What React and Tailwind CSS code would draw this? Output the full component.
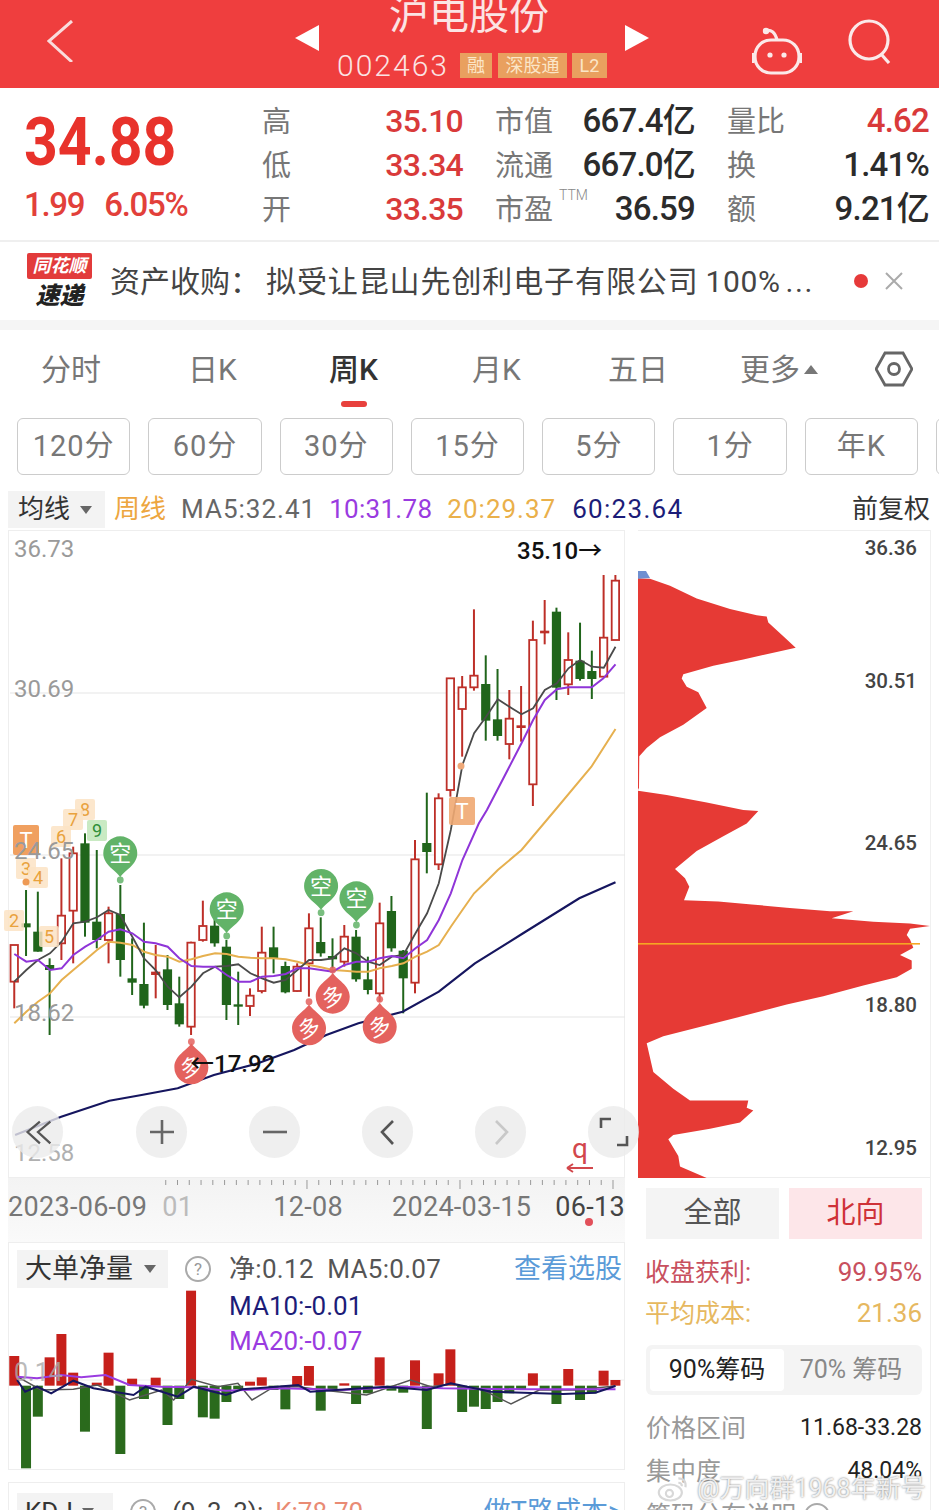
import React from 'react';

const FONT = "font-['Roboto','Noto_Sans_CJK_SC',sans-serif]";

// chart data was read off the zoom crops, so convert back to page pixels
const X = (zx) => zx / 2.49;
const Y = (z) => 830 + z / 3;
const step = 29.35;
const cx = (i) => X(33 + i * step);

const CANDLES = [
  ['R', 345, 345, 455, 535], ['G', 180, 280, 292, 378], ['G', 185, 305, 365, 365], ['G', 385, 405, 420, 615],
  ['R', 85, 257, 340, 390], ['R', 50, 70, 242, 400], ['G', 10, 40, 278, 320], ['G', 60, 275, 330, 355],
  ['R', 230, 250, 330, 400], ['G', 165, 252, 390, 440], ['G', 325, 445, 458, 495], ['G', 278, 462, 527, 535],
  ['r', 345, 425, 435, 505], ['G', 375, 418, 525, 540], ['G', 440, 520, 583, 590], ['R', 335, 338, 590, 615],
  ['R', 212, 288, 330, 335], ['G', 265, 287, 340, 350], ['G', 330, 350, 525, 570], ['G', 425, 523, 530, 585],
  ['R', 475, 497, 528, 558], ['R', 290, 368, 483, 490], ['G', 290, 352, 385, 430], ['G', 395, 408, 487, 490],
  ['R', 400, 410, 483, 485], ['R', 250, 295, 400, 500], ['G', 262, 336, 370, 380], ['G', 325, 378, 388, 415],
  ['R', 285, 320, 395, 410], ['G', 300, 320, 448, 455], ['G', 380, 448, 480, 493], ['R', 218, 280, 490, 515],
  ['G', 198, 243, 355, 365], ['G', 360, 362, 445, 550], ['R', 30, 88, 458, 490], ['G', -112, 39, 66, 130],
  ['R', -110, -95, 103, 120], ['R', -455, -455, -120, -100], ['R', -462, -428, -363, -220], ['R', -662, -463, -428, -418],
  ['G', -524, -438, -328, -268], ['G', -483, -332, -282, -268], ['R', -420, -334, -258, -212], ['r', -432, -314, -306, -265],
  ['R', -628, -570, -137, -72], ['r', -690, -598, -590, -557], ['G', -667, -655, -427, -390], ['R', -593, -510, -437, -405],
  ['G', -622, -508, -453, -448], ['G', -538, -477, -453, -393], ['R', -765, -577, -460, -460], ['R', -765, -748, -570, -570],
];

const MA5 = [[33,455],[63,420],[92,390],[122,370],[151,335],[180,280],[210,275],[239,262],[268,240],[297,255],[327,320],[356,385],[385,420],[415,470],[444,502],[474,470],[503,430],[533,410],[562,408],[591,403],[621,430],[650,445],[679,458],[709,450],[738,420],[767,390],[797,390],[826,385],[855,355],[885,370],[914,395],[943,405],[973,380],[1002,375],[1032,310],[1061,250],[1090,160],[1120,0],[1149,-195],[1178,-290],[1208,-340],[1237,-392],[1266,-370],[1296,-347],[1325,-365],[1354,-420],[1384,-440],[1413,-485],[1442,-510],[1471,-490],[1501,-487],[1530,-550]];
const MA10 = [[33,372],[63,395],[92,390],[122,420],[151,415],[180,375],[210,350],[239,330],[268,305],[297,298],[327,310],[356,335],[385,340],[415,350],[444,385],[474,408],[503,410],[533,410],[562,435],[591,455],[621,455],[650,440],[679,438],[709,432],[738,415],[767,415],[797,420],[826,425],[855,405],[885,395],[914,395],[943,385],[973,378],[1002,385],[1032,355],[1061,330],[1090,270],[1120,190],[1149,90],[1190,-20],[1210,-60],[1296,-260],[1325,-330],[1354,-390],[1384,-422],[1413,-428],[1471,-428],[1500,-455],[1530,-497]];
const MA20 = [[33,580],[63,545],[92,515],[122,490],[151,450],[180,420],[210,390],[239,360],[268,335],[297,338],[327,345],[356,365],[385,375],[415,380],[444,395],[474,388],[503,378],[533,370],[562,372],[591,380],[621,383],[650,385],[679,385],[709,388],[738,395],[767,405],[797,412],[826,420],[855,422],[885,425],[914,425],[943,415],[973,408],[1002,400],[1032,380],[1061,365],[1090,345],[1120,290],[1149,240],[1178,190],[1208,155],[1237,120],[1296,60],[1380,-60],[1470,-190],[1530,-303]];
const MA60 = [[35,915],[150,860],[270,812],[350,795],[440,775],[530,735],[640,700],[730,660],[810,615],[890,580],[1000,545],[1090,485],[1180,400],[1300,310],[1440,205],[1530,157]];

const line = (pts) => pts.map(([a, b]) => `${X(a).toFixed(1)},${Y(b).toFixed(1)}`).join(' ');

const PROFILE = [[24,118],[60,118],[120,135],[200,165],[300,190],[380,205],[410,208],[415,222],[460,255],[497,282],[440,292],[340,310],[250,325],[160,345],[155,355],[170,375],[205,388],[230,425],[160,465],[90,495],[50,520],[28,540],[27,615],[24,620],[24,622],[110,632],[230,650],[340,668],[385,670],[350,700],[280,730],[200,765],[135,808],[165,830],[178,850],[162,882],[265,885],[365,892],[470,900],[600,908],[670,908],[605,925],[730,933],[840,937],[900,943],[840,950],[830,965],[840,975],[850,995],[810,1012],[845,1025],[845,1045],[800,1065],[700,1085],[580,1110],[470,1130],[350,1155],[200,1185],[100,1205],[50,1222],[70,1290],[130,1330],[180,1358],[355,1358],[350,1375],[370,1382],[330,1410],[240,1425],[130,1440],[115,1450],[145,1490],[150,1515],[230,1542],[24,1542]];
const profilePts = PROFILE.map(([a, b]) => `${(630 + a / 3).toFixed(1)},${(530 + b / 2.376).toFixed(1)}`).join(' ');

// big order bars: [colour, end of bar in crop units]
const BARS = [['R',378],['G',715],['G',560],['R',382],['R',312],['R',428],['G',605],['R',458],['R',368],['G',672],['R',446],['G',507],['R',443],['G',585],['G',507],['R',182],['G',562],['G',566],['G',516],['G',478],['R',455],['R',442],['G',480],['G',538],['R',438],['R',408],['G',542],['G',478],['R',460],['G',522],['G',490],['R',382],['G',482],['G',488],['R',391],['G',597],['R',430],['R',358],['G',546],['G',530],['G',537],['G',516],['G',490],['G',480],['R',430],['G',480],['G',522],['R',417],['G',510],['G',490],['R',422],['R',450]];
const VY = (z) => 1230 + z / 3;
const vline = (pts) => pts.map(([a, b]) => `${X(a).toFixed(1)},${VY(b).toFixed(1)}`).join(' ');
const V_MA5 = [[40,440],[100,480],[180,478],[240,465],[320,510],[400,480],[430,510],[474,448],[540,470],[590,460],[625,510],[680,470],[740,470],[800,480],[910,495],[1020,450],[1070,470],[1120,462],[1200,480],[1270,522],[1340,480],[1430,480],[1530,468]];
const V_MA10 = [[40,450],[60,485],[90,470],[125,490],[180,452],[230,475],[330,495],[360,470],[440,500],[480,470],[560,495],[600,478],[740,465],[770,485],[900,475],[960,470],[1060,480],[1120,460],[1220,485],[1400,492],[1480,488],[1530,468]];
const V_MA20 = [[40,440],[90,445],[150,435],[200,442],[260,435],[320,465],[400,470],[480,472],[560,482],[700,475],[850,480],[1000,470],[1100,475],[1300,478],[1530,478]];

const GREEN_PINS = [[297, 70, 150], [562, 238, 318], [797, 168, 248], [885, 205, 285]];
const RED_PINS = [[826, 500, 420], [767, 595, 515], [943, 590, 508], [474, 712, 635]];
const BADGES = [
  ['8', 84, 809, '#fbe3c4', '#e9a23d'], ['7', 72, 819, '#fbe3c4', '#e9a23d'], ['6', 60, 836, '#fbe3c4', '#e9a23d'],
  ['9', 96, 830, '#bfe6b8', '#2f8f3a'], ['3', 25, 868, '#fbe3c4', '#e9a23d'], ['4', 37, 877, '#fbe3c4', '#e9a23d'],
  ['2', 13, 920, '#fbe3c4', '#e9a23d'], ['5', 48, 936, '#fbe3c4', '#e9a23d'],
];

const PILLS = ['120分', '60分', '30分', '15分', '5分', '1分', '年K', ''];

const Help = ({ className }) => (
  <div className={`flex items-center justify-center w-[26px] h-[26px] rounded-full border-2 border-[#aaa] text-[#999] text-[17px] leading-none shrink-0 ${className}`}>?</div>
);

const Candles = () => (
  <g>
    {CANDLES.map(([c, wt, bt, bb, wb], i) => {
      const x = cx(i);
      const red = c !== 'G';
      const col = red ? '#bd2f28' : '#20651b';
      return (
        <g key={i}>
          <line x1={x} x2={x} y1={Y(wt)} y2={Y(wb)} stroke={col} strokeWidth="2" />
          {c === 'R' ? (
            <rect x={x - 3.7} y={Y(bt)} width="7.4" height={Y(bb) - Y(bt)} fill="#fff" stroke={col} strokeWidth="1.8" />
          ) : (
            <rect x={x - 4.6} y={Y(bt)} width="9.2" height={Y(bb) - Y(bt)} fill={col} />
          )}
        </g>
      );
    })}
  </g>
);

const Pin = ({ x, y, dot, up }) => {
  const px = X(x);
  const py = Y(y);
  const s = up ? -1 : 1;
  const fill = up ? '#e4625e' : '#62b368';
  return (
    <g>
      <path
        d={`M${px} ${py + s * 24} C${px - 4} ${py + s * 17} ${px - 17} ${py + s * 12} ${px - 17} ${py} A17 17 0 1 ${up ? 0 : 1} ${px + 17} ${py} C${px + 17} ${py + s * 12} ${px + 4} ${py + s * 17} ${px} ${py + s * 24}Z`}
        fill={fill}
      />
      <circle cx={px} cy={Y(dot)} r="3.4" fill={fill} opacity="0.85" />
      <text x={px} y={py + 8} textAnchor="middle" fontSize="22" fill="#fff" transform={up ? `rotate(-18 ${px} ${py})` : undefined}>
        {up ? '多' : '空'}
      </text>
    </g>
  );
};

const CircleBtn = ({ children, className = '' }) => (
  <div className={`w-[51px] h-[52px] rounded-full bg-[#ebebeb]/80 flex items-center justify-center shrink-0 ${className}`}>{children}</div>
);

const KChart = () => (
  <div className="relative h-[648px] border border-[#eee]">
    <svg viewBox="8 531 617 648" className={`absolute left-0 top-0 w-[617px] h-[648px] overflow-visible ${FONT}`}>
      {[693, 855, 1017].map((y) => (
        <line key={y} x1="9" x2="624" y1={y} y2={y} stroke="#e6e6e6" strokeWidth="1.2" />
      ))}
      <Candles />
      <polyline points={line(MA20)} fill="none" stroke="#e6b04f" strokeWidth="2" />
      <polyline points={line(MA5)} fill="none" stroke="#4a4a4a" strokeWidth="1.8" />
      <polyline points={line(MA10)} fill="none" stroke="#8f35d8" strokeWidth="2" />
      <polyline points={line(MA60)} fill="none" stroke="#16165f" strokeWidth="2.2" />
      {BADGES.map(([t, x, y, bg, col]) => (
        <g key={t}>
          <rect x={x - 10} y={y - 10} width="20" height="21" rx="2" fill={bg} opacity="0.85" />
          <text x={x} y={y + 7} textAnchor="middle" fontSize="18" fill={col}>{t}</text>
        </g>
      ))}
      <circle cx="25" cy="882" r="3.5" fill="#ee9a55" />
      <rect x="12" y="825" width="26" height="30" rx="2" fill="#f0a060" />
      <text x="25" y="848" textAnchor="middle" fontSize="22" fill="#fff">T</text>
      <circle cx="460" cy="766" r="3.5" fill="#eea878" />
      <rect x="448" y="797" width="26" height="28" rx="2" fill="#f0a872" opacity="0.9" />
      <text x="461" y="819" textAnchor="middle" fontSize="22" fill="#fff">T</text>
      {GREEN_PINS.map(([x, y, d]) => <Pin key={x} x={x} y={y} dot={d} />)}
      {RED_PINS.map(([x, y, d]) => <Pin key={x} x={x} y={y} dot={d} up />)}
      <text x="13" y="557" fontSize="24" fill="#9a9a9a">36.73</text>
      <text x="13" y="697" fontSize="24" fill="#9a9a9a">30.69</text>
      <text x="13" y="859" fontSize="24" fill="#9a9a9a">24.65</text>
      <text x="13" y="1021" fontSize="24" fill="#9a9a9a">18.62</text>
      <text x="13" y="1161" fontSize="24" fill="#b0b0b0">12.58</text>
      <text x="516" y="559" fontSize="24" fontWeight="500" fill="#111">35.10→</text>
      <text x="189" y="1072" fontSize="24" fontWeight="500" fill="#111">←17.92</text>
      <text x="579" y="1158" textAnchor="middle" fontSize="28" fill="#d2474c">q</text>
      <path d="M566 1168H592M566 1168l6-4M566 1168l6 4" stroke="#d2474c" strokeWidth="2" fill="none" />
    </svg>
    <div className="absolute left-[3px] top-[575px] flex gap-[62px] z-10">
      <CircleBtn className="mr-[11px]">
        <svg viewBox="0 0 40 40" className="w-[38px] h-[38px]" fill="none" stroke="#555" strokeWidth="2.4"><path d="M22 9 9 20l13 12M33 9 20 20l13 12" /></svg>
      </CircleBtn>
      <CircleBtn>
        <svg viewBox="0 0 30 30" className="w-[30px] h-[30px]" fill="none" stroke="#666" strokeWidth="2.6"><path d="M15 3v24M3 15h24" /></svg>
      </CircleBtn>
      <CircleBtn>
        <svg viewBox="0 0 30 30" className="w-[30px] h-[30px]" fill="none" stroke="#666" strokeWidth="2.6"><path d="M3 15h24" /></svg>
      </CircleBtn>
      <CircleBtn>
        <svg viewBox="0 0 30 30" className="w-[30px] h-[30px]" fill="none" stroke="#555" strokeWidth="2.6"><path d="M20 4 9 15l11 12" /></svg>
      </CircleBtn>
      <CircleBtn>
        <svg viewBox="0 0 30 30" className="w-[30px] h-[30px]" fill="none" stroke="#c8c8c8" strokeWidth="2.6"><path d="M10 4l11 11-11 12" /></svg>
      </CircleBtn>
      <CircleBtn>
        <svg viewBox="0 0 30 30" className="w-[30px] h-[30px]" fill="none" stroke="#555" strokeWidth="2.6"><path d="M2 11V2h10M28 19v9H18" /></svg>
      </CircleBtn>
    </div>
  </div>
);

const DateAxis = () => (
  <div className="relative h-[64px] bg-gradient-to-b from-[#f3f3f3] to-[#fafafa]">
    <svg viewBox="8 0 617 12" className="absolute left-0 top-0 w-[617px] h-[12px]">
      {Array.from({ length: 39 }).map((_, i) => (
        <line key={i} x1={613 - i * 11.77} x2={613 - i * 11.77} y1="2" y2={i % 13 === 0 ? 11 : 7} stroke="#999" strokeWidth="1" />
      ))}
    </svg>
    <div className="flex items-center h-[52px] pt-[6px] text-[27px] tracking-[0.3px] text-[#777] whitespace-nowrap">
      <span>2023-06-09</span>
      <span className="ml-[15px] text-[#bbb]">01</span>
      <span className="ml-[80px]">12-08</span>
      <span className="ml-[49px]">2024-03-15</span>
      <span className="ml-[24px] text-[#444]">06-13</span>
    </div>
    <div className="absolute left-[577px] top-[40px] w-2 h-2 rounded-full bg-[#e2505a]" />
  </div>
);

const VolumePanel = () => (
  <div className="relative h-[228px] border border-[#eee]">
    <svg viewBox="8 1243 617 228" className="absolute left-0 top-0 w-[617px] h-[228px]">
      <line x1="9" x2="624" y1="1380" y2="1380" stroke="#eee" />
      {BARS.map(([c, z], i) => {
        const y = VY(z);
        const base = VY(467);
        return (
          <rect key={i} x={cx(i) - 5} y={Math.min(y, base)} width="10" height={Math.abs(base - y)} fill={c === 'R' ? '#c6201b' : '#2a6a1c'} />
        );
      })}
      <polyline points={vline(V_MA5)} fill="none" stroke="#555" strokeWidth="1.5" />
      <polyline points={vline(V_MA20)} fill="none" stroke="#9a3be0" strokeWidth="2" />
      <polyline points={vline(V_MA10)} fill="none" stroke="#16165f" strokeWidth="2" />
      <text x="13" y="1381" fontSize="25" fill="#aaa" opacity="0.8">0.14</text>
    </svg>
    <div className="relative flex items-center pt-[6px] pl-[8px] pr-[2px]">
      <div className="w-[151px] h-[38px] bg-[#f3f3f3] flex items-center pl-[8px] text-[27px] text-[#333]">
        大单净量
        <span className="ml-[11px] border-x-[6px] border-x-transparent border-t-[8px] border-t-[#666]" />
      </div>
      <Help className="ml-[17px]" />
      <span className="ml-[18px] text-[26px] tracking-[0.3px] text-[#555]">净:0.12&nbsp;&nbsp;MA5:0.07</span>
      <span className="ml-auto text-[27px] text-[#5b9bd8]">查看选股</span>
    </div>
    <div className="relative pl-[220px] text-[26px] leading-[35px] -mt-[1px]">
      <div className="text-[#1c1c78]">MA10:-0.01</div>
      <div className="text-[#9a3be0]">MA20:-0.07</div>
    </div>
  </div>
);

const KdjPanel = () => (
  <div className="mt-[12px] h-[40px] border-t border-x border-[#eee] relative overflow-hidden">
    <div className="flex items-center pt-[9px] pl-[8px] pr-[2px] whitespace-nowrap">
      <div className="w-[96px] h-[38px] bg-[#f3f3f3] flex items-center pl-[8px] text-[26px] text-[#333]">
        KDJ
        <span className="ml-[9px] border-x-[6px] border-x-transparent border-t-[8px] border-t-[#666]" />
      </div>
      <Help className="ml-[17px]" />
      <span className="ml-[16px] text-[26px] text-[#444]">(9, 3, 3):</span>
      <span className="ml-[12px] text-[26px] text-[#e98b74]">K:78.70</span>
      <span className="ml-auto text-[27px] text-[#5b9bd8]">做T路成本&gt;</span>
    </div>
  </div>
);

const ChipPanel = () => (
  <div className="w-[293px] border-r border-[#f0f0f0] shrink-0 relative">
    <div className="relative h-[648px]">
      <svg viewBox="638 531 293 648" className={`absolute left-0 top-0 w-[293px] h-[648px] ${FONT}`}>
        <rect x="638" y="531" width="292" height="1" fill="#eee" />
        <rect x="638" y="1178" width="292" height="1" fill="#eee" />
        <polygon points="638,572 646,572 650,579 638,580" fill="#6f8fd0" />
        <polygon points={profilePts} fill="#e63a35" />
        <rect x="638" y="944" width="282" height="1.6" fill="#f6a623" />
        {[['36.36', 556], ['30.51', 689], ['24.65', 851], ['18.80', 1013], ['12.95', 1156]].map(([t, y]) => (
          <text key={t} x="917" y={y} textAnchor="end" fontSize="20.5" fontWeight="500" fill="#444">{t}</text>
        ))}
      </svg>
    </div>
    <div className="px-[8px] pt-[10px]">
      <div className="flex gap-[10px] w-[276px]">
        <div className="flex-1 h-[51px] flex items-center justify-center bg-[#f4f4f4] text-[29px] text-[#555]">全部</div>
        <div className="flex-1 h-[51px] flex items-center justify-center bg-[#fde6e9] text-[29px] text-[#cf3238]">北向</div>
      </div>
      <div className="w-[276px] mt-[13px] flex justify-between items-center h-[41px] text-[26px] text-[#c8505e]">
        <span className="text-[25px] -ml-[1px]">收盘获利:</span><span>99.95%</span>
      </div>
      <div className="w-[276px] flex justify-between items-center h-[41px] text-[26px] text-[#e6b860]">
        <span className="text-[25px] -ml-[1px]">平均成本:</span><span>21.36</span>
      </div>
      <div className="w-[276px] mt-[11px] h-[50px] bg-[#f4f4f4] rounded-[6px] flex items-center p-[4px]">
        <div className="w-[134px] h-[42px] bg-white rounded-[4px] flex items-center justify-center text-[25px] text-[#222]">90%筹码</div>
        <div className="flex-1 text-center text-[25px] text-[#888]">70% 筹码</div>
      </div>
      <div className="w-[276px] mt-[12px] flex justify-between items-center h-[43px]">
        <span className="text-[25px] text-[#999]">价格区间</span>
        <span className="text-[23px] text-[#222]">11.68-33.28</span>
      </div>
      <div className="w-[276px] flex justify-between items-center h-[43px]">
        <span className="text-[25px] text-[#999]">集中度</span>
        <span className="text-[23px] text-[#222]">48.04%</span>
      </div>
      <div className="flex items-center h-[30px] mt-[8px] text-[25px] text-[#999] whitespace-nowrap">
        筹码分布说明
        <Help className="ml-[8px]" />
      </div>
    </div>
  </div>
);

const App = () => (
  <div className={`relative w-[939px] h-[1510px] overflow-hidden bg-white ${FONT}`}>
    {/* red title bar */}
    <div className="h-[88px] bg-[#ef3e3e] flex items-start pl-[47px] overflow-hidden">
      <svg viewBox="0 0 26 42" className="w-[26px] h-[42px] mt-[20px] shrink-0" fill="none" stroke="#f9dcdc" strokeWidth="3">
        <path d="M25 1 2 21l23 21" />
      </svg>
      <div className="ml-[222px] mt-[25px] w-0 h-0 border-y-[13px] border-y-transparent border-r-[24px] border-r-white shrink-0" />
      <div className="w-[306px] shrink-0 flex flex-col items-center -mt-[4px]">
        <div className="text-[40px] leading-[40px] text-[#fbe4e4] whitespace-nowrap -ml-[6px]">沪电股份</div>
        <div className="flex items-center mt-[11px] h-[36px]">
          <span className="text-[30px] tracking-[2px] font-light text-[#fbe4e4]">002463</span>
          <span className="ml-[11px] w-[32px] h-[25px] bg-[#e9a05f] flex items-center justify-center text-[18px] text-[#fbe6c8]">融</span>
          <span className="ml-[6px] w-[69px] h-[25px] bg-[#e9a05f] flex items-center justify-center text-[18px] text-[#fbe6c8]">深股通</span>
          <span className="ml-[5px] w-[35px] h-[25px] bg-[#e9a05f] flex items-center justify-center text-[18px] text-[#fbe6c8]">L2</span>
        </div>
      </div>
      <div className="mt-[25px] w-0 h-0 border-y-[13px] border-y-transparent border-l-[24px] border-l-white shrink-0" />
      <svg viewBox="0 0 50 50" className="ml-[103px] mt-[27px] w-[50px] h-[50px] shrink-0" fill="none" stroke="#fbe9e9" strokeWidth="3.2">
        <path d="M13 4c6-2 10 1 12 9" />
        <circle cx="14" cy="4" r="1.6" fill="#fbe9e9" />
        <rect x="3" y="13" width="44" height="33" rx="16" />
        <path d="M1 26v10M49 26v10" />
        <circle cx="18" cy="28" r="2.6" fill="#fbe9e9" stroke="none" />
        <circle cx="32" cy="28" r="2.6" fill="#fbe9e9" stroke="none" />
      </svg>
      <svg viewBox="0 0 46 46" className="ml-[45px] mt-[18px] w-[46px] h-[46px] shrink-0" fill="none" stroke="#fbe9e9" strokeWidth="3.2">
        <circle cx="22" cy="22" r="19" />
        <path d="m34 36 8 9" />
      </svg>
    </div>

    {/* quote block */}
    <div className="h-[154px] flex border-b-2 border-[#efefef]">
      <div className="w-[262px] shrink-0 pl-[24px] pt-[19px]">
        <div className="text-[67px] leading-[70px] font-bold text-[#e8322b] origin-left scale-x-[0.88] whitespace-nowrap">34.88</div>
        <div className="mt-[8px] flex text-[33px] leading-[40px] font-medium text-[#e2403a] tracking-[-1.3px] whitespace-nowrap">
          <span>1.99</span>
          <span className="ml-[20px]">6.05%</span>
        </div>
      </div>
      <div className="grid grid-cols-[201px_200px_202px] gap-x-[32px] grid-rows-[44px_44px_44px] pt-[11px] whitespace-nowrap text-[#777]">
        {[
          ['高', '35.10', '市值', '667.4亿', '量比', '4.62'],
          ['低', '33.34', '流通', '667.0亿', '换', '1.41%'],
          ['开', '33.35', '市盈', '36.59', '额', '9.21亿'],
        ].map(([a, b, c, d, e, f], i) => (
          <React.Fragment key={a}>
            <div className="flex justify-between items-center">
              <span className="text-[29px] text-[#777] mt-[3px]">{a}</span>
              <span className="text-[32px] font-medium text-[#d93a3a] tracking-[-0.8px] -mt-[1px]">{b}</span>
            </div>
            <div className="flex justify-between items-center">
              <span className="text-[29px] text-[#777] mt-[3px] flex items-start">
                {c}
                {i === 2 && <span className="text-[14px] leading-[14px] ml-[6px] -mt-[1px] text-[#888] font-light">TTM</span>}
              </span>
              <span className="text-[33px] font-medium text-[#2b2b2b] tracking-[-0.8px] -mt-[1px]">{d}</span>
            </div>
            <div className="flex justify-between items-center">
              <span className="text-[29px] text-[#777] mt-[3px]">{e}</span>
              <span className={`text-[33px] font-medium tracking-[-0.8px] -mt-[1px] ${i === 0 ? 'text-[#d93a3a]' : 'text-[#2b2b2b]'}`}>{f}</span>
            </div>
          </React.Fragment>
        ))}
      </div>
    </div>

    {/* news ticker */}
    <div className="h-[78px] flex items-center pl-[27px]">
      <div className="w-[65px] h-[56px] shrink-0 flex flex-col items-center">
        <div className="w-[65px] h-[26px] bg-[#e23b3b] rounded-[2px] flex items-center justify-center text-[18px] italic font-bold leading-none text-white whitespace-nowrap">同花顺</div>
        <div className="mt-[5px] text-[24px] italic font-black leading-none text-[#222]">速递</div>
      </div>
      <div className="ml-[18px] flex text-[30px] text-[#444] whitespace-nowrap w-[728px]">
        <span className="w-[156px]">资产收购：</span>
        <span className="tracking-[0.9px]">拟受让昆山先创利电子有限公司</span>
        <span className="ml-[7px] tracking-[0.6px]">100%</span>
        <span className="ml-[5px] tracking-[1.5px]">...</span>
      </div>
      <div className="ml-[16px] w-[14px] h-[14px] rounded-full bg-[#e63a3a] shrink-0" />
      <svg viewBox="0 0 18 18" className="ml-[17px] w-[18px] h-[18px] shrink-0" fill="none" stroke="#aaa" strokeWidth="2"><path d="m1 1 16 16M17 1 1 17" /></svg>
    </div>
    <div className="h-[10px] bg-[#f5f5f5]" />

    {/* period tabs */}
    <div className="h-[78px] flex items-center pl-[41px] text-[30px] text-[#777] whitespace-nowrap">
      <span className="w-[60px]">分时</span>
      <span className="ml-[87px] w-[48px]">日K</span>
      <div className="relative ml-[93px] w-[50px] font-medium text-[#333]">
        周K
        <div className="absolute left-[12px] top-[54px] w-[26px] h-[6px] rounded-full bg-[#e8413d]" />
      </div>
      <span className="ml-[93px] w-[49px]">月K</span>
      <span className="ml-[87px] w-[58px]">五日</span>
      <span className="ml-[74px] flex items-center">
        更多
        <span className="ml-[4px] border-x-[7px] border-x-transparent border-b-[9px] border-b-[#777]" />
      </span>
      <svg viewBox="0 0 38 36" className="ml-[57px] w-[38px] h-[36px]" fill="none" stroke="#666" strokeWidth="2.8">
        <path d="M10 2h18l9 16-9 16H10L1 18z" />
        <circle cx="19" cy="18" r="5.5" />
      </svg>
    </div>

    {/* interval pills */}
    <div className="flex gap-[18px] pl-[17px] pt-[10px] h-[81px]">
      {PILLS.map((p, i) => (
        <div key={i} className="w-[113.3px] h-[57px] shrink-0 border-[1.5px] border-[#ccc] rounded-[6px] flex items-center justify-center text-[29px] tracking-[1px] text-[#777]">{p}</div>
      ))}
    </div>

    {/* moving average legend */}
    <div className="h-[41px] flex items-center pl-[8px] pr-[9px] text-[26px] whitespace-nowrap">
      <div className="w-[97px] h-[37px] bg-[#f3f3f3] flex items-center pl-[10px] text-[#333]">
        均线
        <span className="ml-[10px] border-x-[6px] border-x-transparent border-t-[8px] border-t-[#666]" />
      </div>
      <span className="ml-[9px] text-[#eda63f]">周线</span>
      <span className="ml-[15px] tracking-[1px] text-[#666]">MA5:32.41</span>
      <span className="ml-[13px] tracking-[0.3px] text-[#9a3be0]">10:31.78</span>
      <span className="ml-[15px] tracking-[1px] text-[#eab04a]">20:29.37</span>
      <span className="ml-[16px] tracking-[1.3px] text-[#1c1c78]">60:23.64</span>
      <span className="ml-auto text-[#333]">前复权</span>
    </div>

    {/* charts */}
    <div className="flex pl-[8px] gap-[13px]">
      <div className="w-[617px] shrink-0">
        <KChart />
        <DateAxis />
        <VolumePanel />
        <KdjPanel />
      </div>
      <ChipPanel />
    </div>

    {/* weibo watermark */}
    <div className="absolute left-[657px] top-[1470px] flex items-center text-[25px] text-white/85 [text-shadow:0_0_2px_rgba(90,90,90,0.9)] whitespace-nowrap">
      <svg viewBox="0 0 36 30" className="w-[32px] h-[30px]" fill="none" stroke="#d8d8d8" strokeWidth="2.4">
        <ellipse cx="15" cy="19" rx="13" ry="9" />
        <circle cx="14" cy="20" r="4" />
        <path d="M24 3c6 0 9 4 8 10M24 8c3 0 4 2 4 4" />
      </svg>
      <span className="ml-[8px]">@万向群1968年新号</span>
    </div>
  </div>
);

export default App;
